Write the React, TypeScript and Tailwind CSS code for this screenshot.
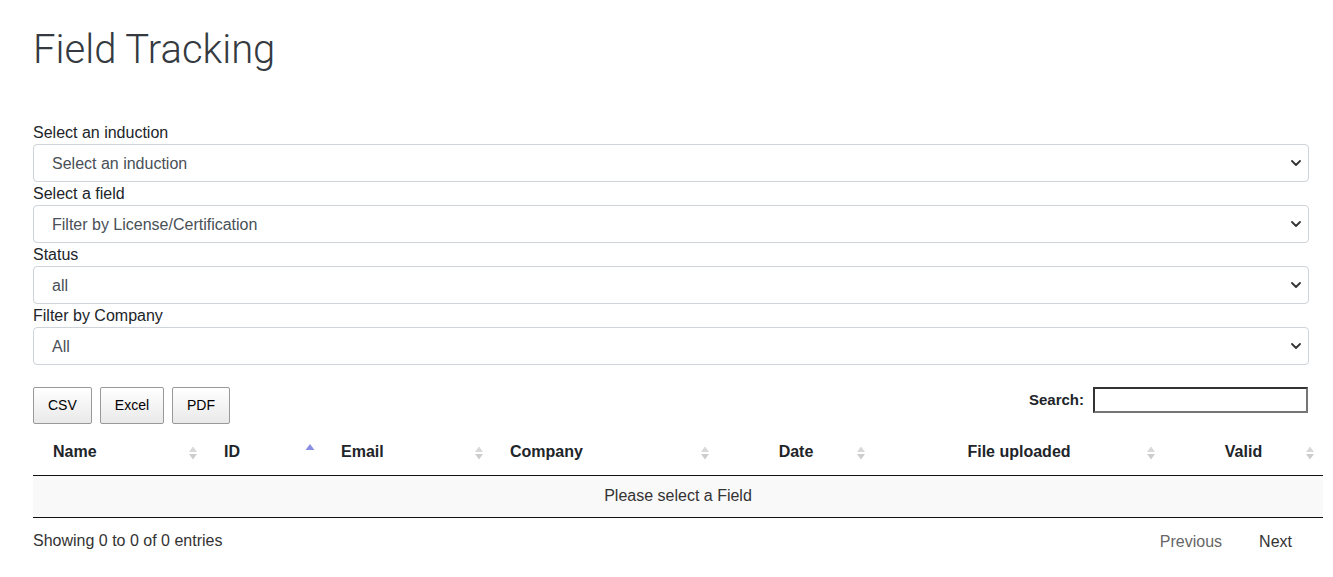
import React from 'react';

type Col = { label: string; width: number; align: 'left' | 'center'; sort: 'none' | 'asc' };

const columns: Col[] = [
  { label: 'Name', width: 173, align: 'left', sort: 'none' },
  { label: 'ID', width: 117, align: 'left', sort: 'asc' },
  { label: 'Email', width: 169, align: 'left', sort: 'none' },
  { label: 'Company', width: 226, align: 'left', sort: 'none' },
  { label: 'Date', width: 156, align: 'center', sort: 'none' },
  { label: 'File uploaded', width: 290, align: 'center', sort: 'none' },
  { label: 'Valid', width: 159, align: 'center', sort: 'none' },
];

const filters = [
  { label: 'Select an induction', value: 'Select an induction' },
  { label: 'Select a field', value: 'Filter by License/Certification' },
  { label: 'Status', value: 'all' },
  { label: 'Filter by Company', value: 'All' },
];

const SortIcon: React.FC<{ sort: 'none' | 'asc' }> = ({ sort }) => {
  if (sort === 'asc') {
    return (
      <svg width="10" height="14" viewBox="0 0 10 14" className="absolute right-[8px] top-[12px]">
        <path d="M0.5 8 L5 2 L9.5 8 Z" fill="#8a8fe3" />
      </svg>
    );
  }
  return (
    <svg width="10" height="14" viewBox="0 0 10 14" className="absolute right-[8px] top-[16px]">
      <path d="M1 6 L5 0.5 L9 6 Z" fill="#d8d8d8" />
      <path d="M1 8 L5 13.5 L9 8 Z" fill="#cdcdcd" />
    </svg>
  );
};

const Chevron = () => (
  <svg width="10" height="6" viewBox="0 0 10 6" className="pointer-events-none absolute right-[8px] top-[16px]">
    <path d="M1 1 L5 5 L9 1" fill="none" stroke="#333" strokeWidth="1.8" strokeLinecap="round" strokeLinejoin="round" />
  </svg>
);

const ExportButton: React.FC<{ label: string }> = ({ label }) => (
  <button className="h-[37px] px-[14px] rounded-[2px] border border-[#999] bg-gradient-to-b from-white to-[#e9e9e9] text-[14px] leading-[21px] text-black">
    {label}
  </button>
);

export default function App() {
  return (
    <div className="min-h-[577px] w-full bg-white text-[#212529] font-['Liberation_Sans',Arial,sans-serif]">
      <div className="ml-[33px] w-[1276px]">
        <h1 className="pt-[26px] mb-[47px] text-[40px] leading-[48px] font-light text-[#343a40] font-['Roboto',sans-serif]">
          Field Tracking
        </h1>

        {filters.map((f) => (
          <div key={f.label}>
            <label className="block text-[16px] leading-[23px]">{f.label}</label>
            <div className="relative">
              <div className="h-[38px] rounded-[4px] border border-[#ced4da] pl-[18px] pt-[1px] text-[16px] leading-[35px] text-[#495057]">
                {f.value}
              </div>
              <Chevron />
            </div>
          </div>
        ))}

        <div className="mt-[22px] flex items-start justify-between">
          <div className="flex gap-[8px]">
            <ExportButton label="CSV" />
            <ExportButton label="Excel" />
            <ExportButton label="PDF" />
          </div>
          <div className="flex h-[26px] items-center gap-[9px] mr-[1px]">
            <span className="text-[15px] font-bold">Search:</span>
            <input
              type="text"
              className="h-[26px] w-[215px] border-2 border-t-[#333] border-l-[#333] border-r-[#767676] border-b-[#767676] bg-white outline-none"
            />
          </div>
        </div>

        <table className="mt-[6px] w-[1290px] table-fixed border-collapse text-[16px]">
          <colgroup>
            {columns.map((c) => (
              <col key={c.label} style={{ width: c.width }} />
            ))}
          </colgroup>
          <thead>
            <tr>
              {columns.map((c, i) => (
                <th
                  key={c.label}
                  className={`relative border-b border-[#111] pr-[18px] pt-[10px] pb-[11px] leading-[24px] font-bold text-[#212529] ${
                    i === 0 ? 'pl-[20px]' : 'pl-[18px]'
                  } ${c.align === 'left' ? 'text-left' : 'text-center'}`}
                >
                  {c.label}
                  <SortIcon sort={c.sort} />
                </th>
              ))}
            </tr>
          </thead>
          <tbody>
            <tr className="bg-[#f9f9f9]">
              <td colSpan={7} className="border-b border-[#111] px-[10px] pt-[8px] pb-[9px] text-center leading-[24px] text-[#333]">
                Please select a Field
              </td>
            </tr>
          </tbody>
        </table>

        <div className="flex items-start justify-between">
          <div className="pt-[11px] text-[16px] leading-[24px] text-[#333]">Showing 0 to 0 of 0 entries</div>
          <div className="mt-[3px] flex gap-[3px] text-[16px] leading-[24px]">
            <span className="border border-transparent px-[16px] py-[8px] text-[#666]">Previous</span>
            <span className="border border-transparent px-[16px] py-[8px] text-[#333]">Next</span>
          </div>
        </div>
      </div>
    </div>
  );
}
